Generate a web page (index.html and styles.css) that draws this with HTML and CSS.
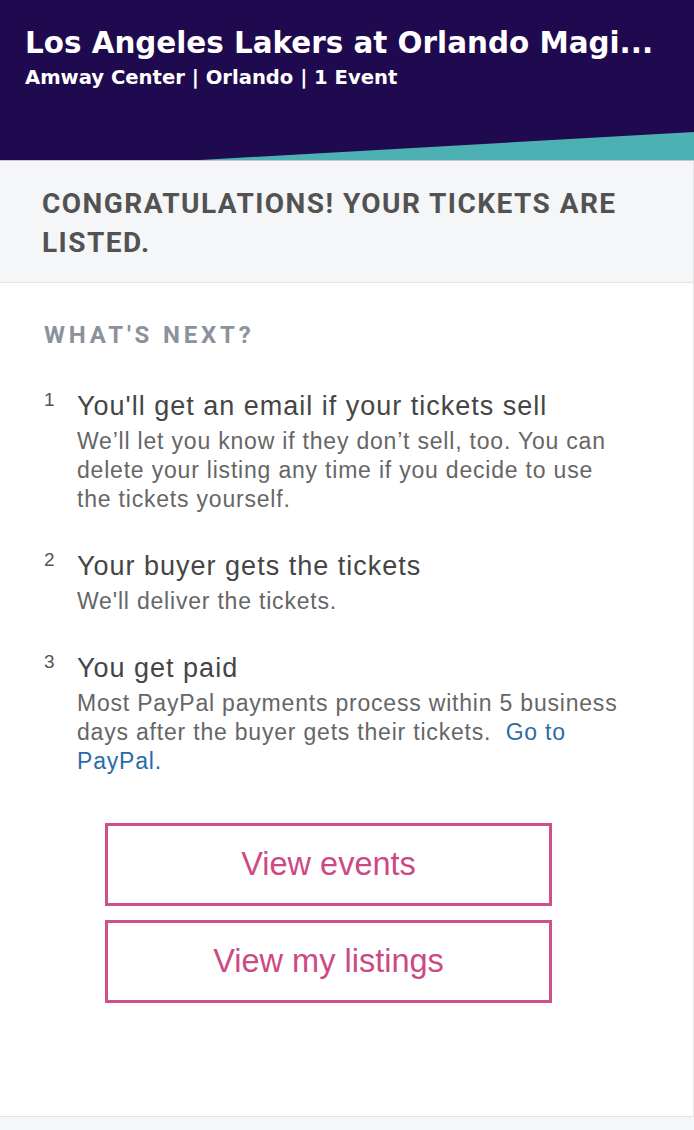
FILE: index.html
```html
<!DOCTYPE html>
<html lang="en">
<head>
<meta charset="utf-8">
<title>Your tickets are listed</title>
<link rel="stylesheet" href="styles.css">
</head>
<body>
<div class="page">
  <header class="hero">
    <h1 class="hero-title">Los Angeles Lakers at Orlando Magi...</h1>
    <p class="hero-sub">Amway Center | Orlando | 1 Event</p>
  </header>
  <section class="banner">
    <h2 class="banner-text">Congratulations! Your tickets are listed.</h2>
  </section>
  <main class="content">
    <h3 class="next-title">What's next?</h3>
    <ol class="steps">
      <li class="step">
        <span class="step-num">1</span>
        <div class="step-body">
          <div class="step-title">You'll get an email if your tickets sell</div>
          <p class="step-text">We’ll let you know if they don’t sell, too. You can delete your listing any time if you decide to use the tickets yourself.</p>
        </div>
      </li>
      <li class="step">
        <span class="step-num">2</span>
        <div class="step-body">
          <div class="step-title">Your buyer gets the tickets</div>
          <p class="step-text">We'll deliver the tickets.</p>
        </div>
      </li>
      <li class="step">
        <span class="step-num">3</span>
        <div class="step-body">
          <div class="step-title">You get paid</div>
          <p class="step-text">Most PayPal payments process within 5 business days after the buyer gets their tickets.&nbsp; <a class="link" href="#">Go to PayPal.</a></p>
        </div>
      </li>
    </ol>
    <div class="actions">
      <a class="btn" href="#">View events</a>
      <a class="btn" href="#">View my listings</a>
    </div>
  </main>
  <footer class="foot"></footer>
</div>
</body>
</html>
```

FILE: styles.css
```css
* { box-sizing: border-box; }
html, body { margin: 0; padding: 0; background: #ffffff; }
body { font-family: "Liberation Sans", Arial, sans-serif; }

.page { width: 694px; min-height: 1130px; display: flex; flex-direction: column; }

.hero {
  position: relative;
  height: 161px;
  background: #200a4f;
  padding: 25px 25px 0 25px;
  border-bottom: 1px solid #c9c6d2;
  overflow: hidden;
}
.hero::after {
  content: "";
  position: absolute;
  left: 0; right: 0; bottom: 0;
  height: 28px;
  background: #4db1b3;
  clip-path: polygon(200px 100%, 100% 0, 100% 100%);
}
.hero-title {
  margin: 0;
  font-family: "DejaVu Sans", "Liberation Sans", sans-serif;
  font-weight: 700;
  font-size: 29.4px;
  line-height: 36px;
  color: #ffffff;
  white-space: nowrap;
  overflow: hidden;
}
.hero-sub {
  margin: 5px 0 0 0;
  font-family: "DejaVu Sans", "Liberation Sans", sans-serif;
  font-weight: 700;
  font-size: 19.6px;
  line-height: 24px;
  color: #ffffff;
}

.banner {
  background: #f5f6f8;
  padding: 23px 40px 20px 42px;
  border-bottom: 1px solid #e3e4e6;
  border-right: 1px solid #e6e7e9;
}
.banner-text {
  margin: 0;
  font-family: Roboto, "Liberation Sans", sans-serif;
  font-weight: 700;
  font-size: 28px;
  line-height: 39px;
  letter-spacing: 1.45px;
  text-transform: uppercase;
  color: #525252;
}

.content {
  flex: 1;
  padding: 38px 40px 113px 44px;
  border-right: 1px solid #e6e7e9;
}
.next-title {
  margin: 0;
  font-family: Roboto, "Liberation Sans", sans-serif;
  font-weight: 700;
  font-size: 24px;
  line-height: 28px;
  letter-spacing: 3.8px;
  text-transform: uppercase;
  color: #8b929c;
}

.steps {
  list-style: none;
  margin: 41px 0 0 0;
  padding: 0;
  display: flex;
  flex-direction: column;
  gap: 36px;
}
.step { display: flex; align-items: flex-start; }
.step-num {
  width: 33px;
  flex: none;
  font-size: 19px;
  line-height: 19px;
  color: #555555;
}
.step-title {
  font-size: 27px;
  line-height: 32px;
  letter-spacing: 1px;
  color: #454545;
}
.step-text {
  margin: 5px 0 0 0;
  font-size: 23px;
  line-height: 29px;
  letter-spacing: 0.8px;
  color: #666666;
  max-width: 555px;
}
.link { color: #2a6ca6; text-decoration: none; }

.actions {
  margin: 47px 0 0 61px;
  width: 447px;
  display: flex;
  flex-direction: column;
  gap: 14px;
}
.btn {
  display: flex;
  align-items: center;
  justify-content: center;
  height: 83px;
  border: 3px solid #cf4f88;
  color: #cc4a84;
  font-size: 32.5px;
  text-decoration: none;
  background: #ffffff;
}

.foot {
  height: 14px;
  background: #f5f6f8;
  border-top: 1px solid #e3e4e6;
}
```
